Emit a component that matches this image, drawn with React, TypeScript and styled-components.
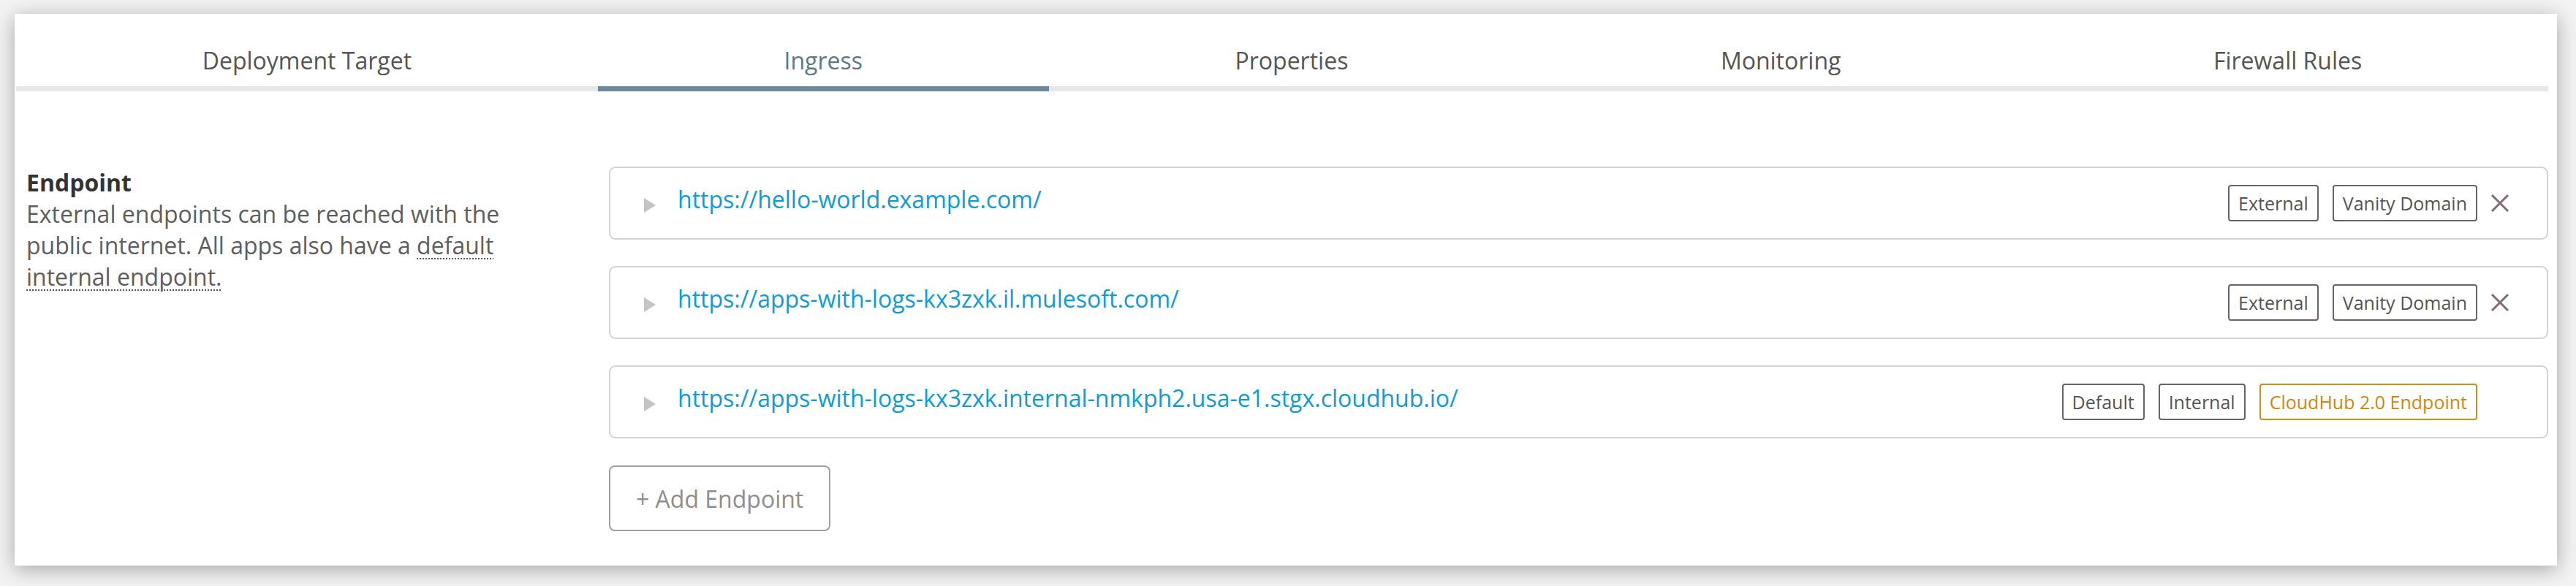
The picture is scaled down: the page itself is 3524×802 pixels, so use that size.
import React from "react";
import styled, { createGlobalStyle } from "styled-components";

const Global = createGlobalStyle`
  html, body { margin: 0; padding: 0; background: #f3f3f3; }
  body { font-family: "Open Sans", "Noto Sans", sans-serif; }
  * { box-sizing: border-box; }
`;

const Frame = styled.div`
  padding: 19px 26px 28px 20px;
`;

const Card = styled.div`
  background: #ffffff;
  height: 755px;
  padding: 0 12px 47px 2px;
  box-shadow: 0 5px 26px rgba(0, 0, 0, 0.32);
  display: flex;
  flex-direction: column;
`;

const TabBar = styled.div`
  display: flex;
`;

const Tab = styled.div<{ $active?: boolean }>`
  flex: 1 1 auto;
  text-align: center;
  font-size: 32px;
  line-height: 44px;
  padding: 42px 0 13px;
  color: ${(p) => (p.$active ? "#5c7987" : "#555555")};
  border-bottom: 7px solid ${(p) => (p.$active ? "#6b8a99" : "#e7e7e8")};
  white-space: nowrap;
  cursor: pointer;
`;

const Section = styled.div`
  display: grid;
  grid-template-columns: 700px 1fr;
  column-gap: 97px;
  padding: 103px 0 0 14px;
`;

const Intro = styled.div`
  font-size: 32px;
  line-height: 43px;
  color: #5e5e5e;
`;

const Title = styled.div`
  font-weight: 700;
  color: #333333;
`;

const Dotted = styled.span`
  text-decoration: underline dotted #5a5a5a;
  text-decoration-thickness: 2px;
  text-underline-offset: 5px;
`;

const List = styled.div`
  display: flex;
  flex-direction: column;
  align-items: flex-start;
`;

const Rows = styled.div`
  display: flex;
  flex-direction: column;
  gap: 36px;
  align-self: stretch;
`;

const Row = styled.div`
  height: 100px;
  border: 2px solid #d3d3d3;
  border-radius: 9px;
  display: flex;
  align-items: center;
  padding: 0 51px 0 46px;
`;

const Caret = styled.span`
  width: 0;
  height: 0;
  border-left: 16px solid #c4c4c4;
  border-top: 10px solid transparent;
  border-bottom: 10px solid transparent;
  margin-right: 30px;
  margin-top: 6px;
  flex: none;
`;

const Link = styled.a`
  flex: 1;
  font-size: 32px;
  line-height: 44px;
  color: #0b9ddb;
  text-decoration: none;
  margin-bottom: 10px;
  white-space: nowrap;
`;

const Badges = styled.div`
  display: flex;
  gap: 19px;
  align-items: center;
`;

const Badge = styled.span<{ $accent?: boolean }>`
  height: 50px;
  display: inline-flex;
  align-items: center;
  padding: 0 12px;
  border: 2px solid ${(p) => (p.$accent ? "#d98d0c" : "#666666")};
  border-radius: 4px;
  font-size: 25px;
  color: ${(p) => (p.$accent ? "#d08611" : "#555555")};
  white-space: nowrap;
`;

const Remove = styled.button<{ $hidden?: boolean }>`
  margin-left: 18px;
  width: 26px;
  height: 26px;
  padding: 0;
  border: 0;
  background: none;
  display: flex;
  align-items: center;
  justify-content: center;
  visibility: ${(p) => (p.$hidden ? "hidden" : "visible")};
  cursor: pointer;
`;

const AddButton = styled.button`
  margin-top: 37px;
  height: 90px;
  padding: 0 35px;
  border: 2px solid #a0a0a0;
  border-radius: 8px;
  background: #ffffff;
  font-family: "Open Sans", "Noto Sans", sans-serif;
  font-size: 32px;
  color: #8e8e8e;
  cursor: pointer;
`;

const CloseIcon = () => (
  <svg width="26" height="26" viewBox="0 0 26 26">
    <path d="M2 2 L24 24 M24 2 L2 24" stroke="#8a6677" strokeWidth="3" strokeLinecap="butt" />
  </svg>
);

type Endpoint = {
  url: string;
  badges: { label: string; accent?: boolean }[];
  removable: boolean;
};

const endpoints: Endpoint[] = [
  {
    url: "https://hello-world.example.com/",
    badges: [{ label: "External" }, { label: "Vanity Domain" }],
    removable: true,
  },
  {
    url: "https://apps-with-logs-kx3zxk.il.mulesoft.com/",
    badges: [{ label: "External" }, { label: "Vanity Domain" }],
    removable: true,
  },
  {
    url: "https://apps-with-logs-kx3zxk.internal-nmkph2.usa-e1.stgx.cloudhub.io/",
    badges: [{ label: "Default" }, { label: "Internal" }, { label: "CloudHub 2.0 Endpoint", accent: true }],
    removable: false,
  },
];

const tabs = ["Deployment Target", "Ingress", "Properties", "Monitoring", "Firewall Rules"];

export default function App() {
  return (
    <>
      <Global />
      <Frame>
        <Card>
          <TabBar>
            {tabs.map((t) => (
              <Tab key={t} $active={t === "Ingress"}>
                {t}
              </Tab>
            ))}
          </TabBar>
          <Section>
            <Intro>
              <Title>Endpoint</Title>
              External endpoints can be reached with the public internet. All apps also have a{" "}
              <Dotted>default internal endpoint.</Dotted>
            </Intro>
            <List>
              <Rows>
                {endpoints.map((e) => (
                  <Row key={e.url}>
                    <Caret />
                    <Link href="#">{e.url}</Link>
                    <Badges>
                      {e.badges.map((b) => (
                        <Badge key={b.label} $accent={b.accent}>
                          {b.label}
                        </Badge>
                      ))}
                    </Badges>
                    <Remove $hidden={!e.removable} aria-label="Remove">
                      <CloseIcon />
                    </Remove>
                  </Row>
                ))}
              </Rows>
              <AddButton>+ Add Endpoint</AddButton>
            </List>
          </Section>
        </Card>
      </Frame>
    </>
  );
}
